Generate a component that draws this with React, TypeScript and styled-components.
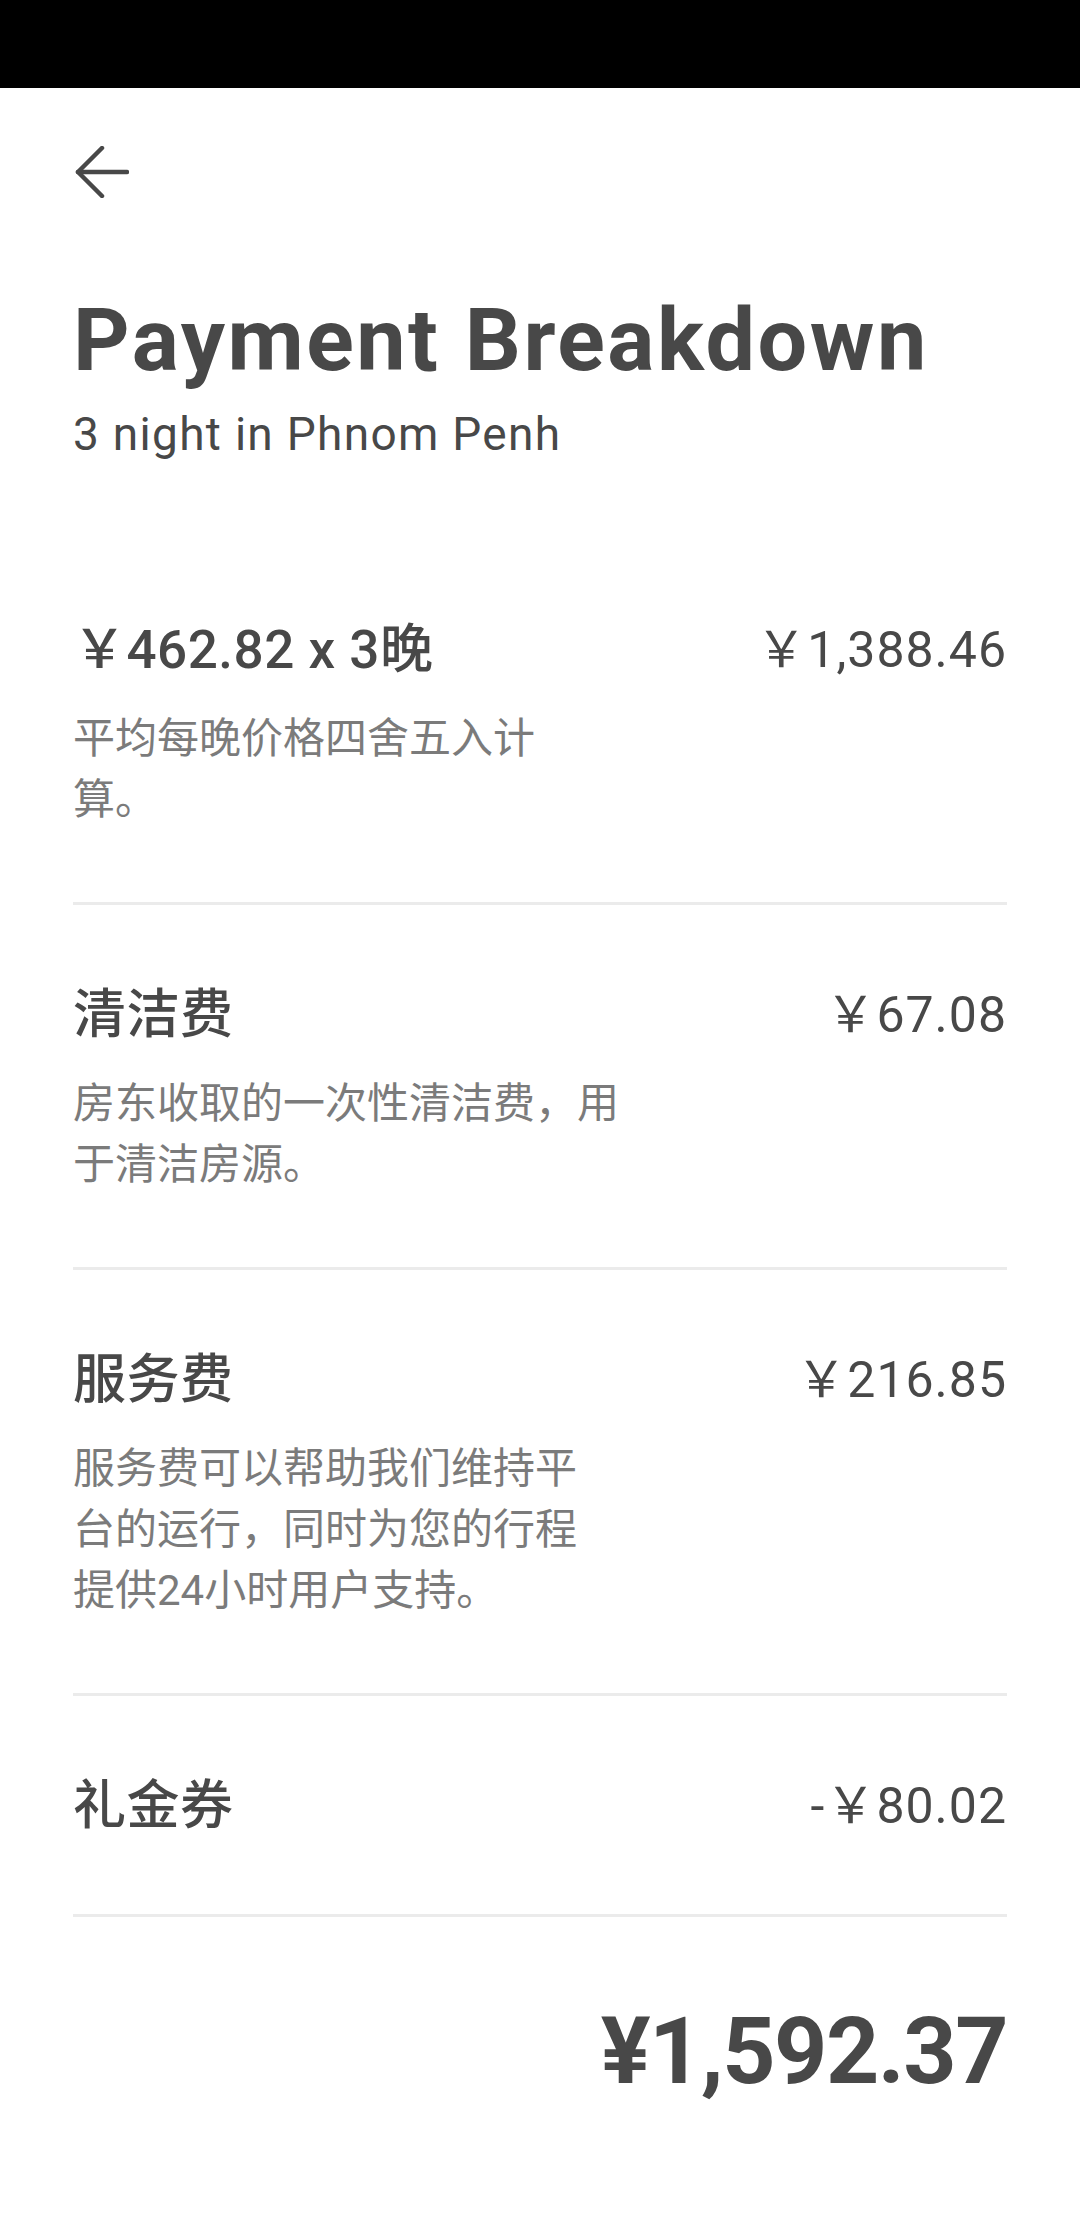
import styled, { createGlobalStyle } from 'styled-components';

const GlobalStyle = createGlobalStyle`
  html, body {
    margin: 0;
    padding: 0;
    background: #fff;
  }
  body {
    font-family: Roboto, "Noto Sans CJK SC", sans-serif;
    color: #484848;
  }
  * { box-sizing: border-box; }
`

const StatusBar = styled.div`
  height: 88px;
  background: #000;
`

const Page = styled.div`
  padding: 0 73px;
`

const Nav = styled.div`
  height: 168px;
  display: flex;
  align-items: center;
`

const BackButton = styled.button`
  border: none;
  background: none;
  padding: 0;
  display: flex;
  cursor: pointer;
`

const Title = styled.h1`
  margin: 34px 0 0;
  font-size: 88px;
  line-height: 100px;
  font-weight: 700;
  letter-spacing: 2.5px;
  color: #484848;
`

const Subtitle = styled.p`
  margin: 14px 0 0;
  font-size: 46px;
  line-height: 60px;
  font-weight: 400;
  letter-spacing: 1.3px;
  color: #484848;
`

const List = styled.div`
  margin-top: 76px;
  display: flex;
  flex-direction: column;
`

const Row = styled.div<{ $hasNote: boolean }>`
  display: flex;
  justify-content: space-between;
  align-items: flex-start;
  gap: 200px;
  padding: 80px 0 ${props => (props.$hasNote ? '72px' : '78px')};
  border-bottom: 3px solid #ebebeb;
`

const Info = styled.div`
  flex: 1;
  min-width: 0;
  display: flex;
  flex-direction: column;
  gap: 28px;
`

const Label = styled.div`
  font-size: 53px;
  line-height: 60px;
  font-weight: 500;
  letter-spacing: 0.5px;
  color: #484848;
`

const Note = styled.div`
  font-size: 42px;
  line-height: 61px;
  color: #7b7b7b;
`

const Amount = styled.div`
  font-size: 50px;
  line-height: 60px;
  font-weight: 400;
  letter-spacing: 1px;
  color: #484848;
  white-space: nowrap;
`

const Total = styled.div`
  margin-top: 80px;
  text-align: right;
  font-size: 93px;
  line-height: 110px;
  font-weight: 700;
  letter-spacing: -1.5px;
  color: #484848;
`

const ArrowLeft = () => (
  <svg width="56" height="52" viewBox="0 0 56 52" fill="none" stroke="#484848" strokeWidth="4.5" strokeLinecap="round" strokeLinejoin="round">
    <path d="M54 26H5" />
    <path d="M29 2L5 26l24 24" />
  </svg>
)

type Item = {
  label: string
  amount: string
  note?: string
}

const items: Item[] = [
  { label: '￥462.82 x 3晚', amount: '￥1,388.46', note: '平均每晚价格四舍五入计算。' },
  { label: '清洁费', amount: '￥67.08', note: '房东收取的一次性清洁费，用于清洁房源。' },
  { label: '服务费', amount: '￥216.85', note: '服务费可以帮助我们维持平台的运行，同时为您的行程提供24小时用户支持。' },
  { label: '礼金券', amount: '-￥80.02' },
]

const App = () => {
  return (
    <>
      <GlobalStyle />
      <StatusBar />
      <Page>
        <Nav>
          <BackButton aria-label="back">
            <ArrowLeft />
          </BackButton>
        </Nav>
        <Title>Payment Breakdown</Title>
        <Subtitle>3 night in Phnom Penh</Subtitle>
        <List>
          {items.map((item) => (
            <Row key={item.label} $hasNote={!!item.note}>
              <Info>
                <Label>{item.label}</Label>
                {item.note && <Note>{item.note}</Note>}
              </Info>
              <Amount>{item.amount}</Amount>
            </Row>
          ))}
        </List>
        <Total>¥1,592.37</Total>
      </Page>
    </>
  )
}

export default App
